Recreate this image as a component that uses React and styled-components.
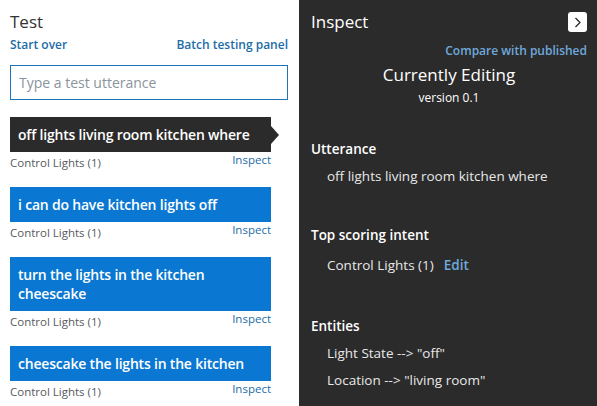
import React from 'react';
import styled, { createGlobalStyle } from 'styled-components';

const GlobalStyle = createGlobalStyle`
  html, body {
    margin: 0;
    padding: 0;
    background: #ffffff;
  }
  body {
    font-family: 'Open Sans', 'Noto Sans', sans-serif;
  }
`;

const Page = styled.div`
  display: grid;
  grid-template-columns: 299px 1fr;
  width: 597px;
  height: 406px;
  overflow: hidden;
`;

const TestPanel = styled.section`
  display: flex;
  flex-direction: column;
  padding: 10px 11px 0 10px;
  background: #fff;
`;

const Title = styled.h1`
  margin: 0;
  font-size: 17px;
  font-weight: 400;
  line-height: 24px;
  color: ${p => (p.dark ? '#ffffff' : '#333333')};
`;

const LinkRow = styled.div`
  display: flex;
  justify-content: space-between;
  margin-top: 3px;
`;

const Link = styled.a`
  font-size: 12px;
  font-weight: 600;
  line-height: 16px;
  color: ${p => (p.light ? '#6fa9dc' : '#1d6ca8')};
  cursor: pointer;
`;

const Input = styled.input`
  box-sizing: border-box;
  margin-top: 12px;
  width: 100%;
  height: 35px;
  padding: 0 8px;
  border: 1px solid #1d74b8;
  font-family: inherit;
  font-size: 14px;
  outline: none;
  &::placeholder {
    color: #8a949c;
  }
`;

const List = styled.div`
  display: flex;
  flex-direction: column;
  gap: 15px;
  margin-top: 17px;
  width: 261px;
`;

const Item = styled.div`
  display: flex;
  flex-direction: column;
`;

const Bubble = styled.div`
  position: relative;
  padding: 8px 8px;
  font-size: 14px;
  font-weight: 600;
  line-height: 19px;
  color: #ffffff;
  background: ${p => (p.active ? '#2b2b2b' : '#0a78d2')};
  letter-spacing: -0.2px;

  &::after {
    content: '';
    display: ${p => (p.active ? 'block' : 'none')};
    position: absolute;
    right: -8px;
    top: 50%;
    transform: translateY(-50%);
    border-top: 9px solid transparent;
    border-bottom: 9px solid transparent;
    border-left: 8px solid #2b2b2b;
  }
`;

const Meta = styled.div`
  display: flex;
  justify-content: space-between;
  align-items: flex-start;
  height: 20px;
  font-size: 11.5px;
  line-height: 14px;
`;

const Intent = styled.span`
  margin-top: 4px;
  color: #555b60;
`;

const InspectLink = styled.a`
  margin-top: 1px;
  color: #1d6ca8;
  cursor: pointer;
`;

const InspectPanel = styled.section`
  display: flex;
  flex-direction: column;
  padding: 10px 10px 0 12px;
  background: #2b2b2b;
  color: #ffffff;
`;

const Header = styled.div`
  display: flex;
  justify-content: space-between;
  align-items: center;
`;

const CloseButton = styled.button`
  display: flex;
  align-items: center;
  justify-content: center;
  width: 19px;
  height: 20px;
  padding: 0;
  border: none;
  border-radius: 3px;
  background: #ffffff;
  cursor: pointer;
`;

const CompareRow = styled.div`
  display: flex;
  justify-content: flex-end;
  margin-top: 9px;
`;

const Version = styled.div`
  text-align: center;
  font-size: ${p => (p.big ? '17px' : '12px')};
  line-height: ${p => (p.big ? '24px' : '20px')};
  margin-top: ${p => (p.big ? '4px' : '1px')};
`;

const Section = styled.div`
  display: flex;
  flex-direction: column;
  margin-top: ${p => p.top || 0}px;
`;

const Label = styled.div`
  font-size: 13.5px;
  font-weight: 600;
  line-height: 20px;
`;

const Value = styled.div`
  padding-left: 16px;
  margin-top: ${p => p.gap || 7}px;
  font-size: 13.5px;
  line-height: 20px;
  color: #e8e8e8;
`;

const EditLink = styled.a`
  margin-left: 10px;
  font-weight: 600;
  color: #6fa9dc;
  cursor: pointer;
`;

const utterances = [
  { text: 'off lights living room kitchen where', active: true },
  { text: 'i can do have kitchen lights off' },
  { text: 'turn the lights in the kitchen cheescake' },
  { text: 'cheescake the lights in the kitchen' },
];

const Chevron = () => (
  <svg width="8" height="11" viewBox="0 0 8 11">
    <path d="M1.5 1 L6 5.5 L1.5 10" fill="none" stroke="#222" strokeWidth="1.2" />
  </svg>
);

export default function App() {
  return (
    <Page>
      <GlobalStyle />
      <TestPanel>
        <Title>Test</Title>
        <LinkRow>
          <Link>Start over</Link>
          <Link>Batch testing panel</Link>
        </LinkRow>
        <Input placeholder="Type a test utterance" />
        <List>
          {utterances.map((u, i) => (
            <Item key={i}>
              <Bubble active={u.active}>{u.text}</Bubble>
              <Meta>
                <Intent>Control Lights (1)</Intent>
                <InspectLink>Inspect</InspectLink>
              </Meta>
            </Item>
          ))}
        </List>
      </TestPanel>
      <InspectPanel>
        <Header>
          <Title dark>Inspect</Title>
          <CloseButton aria-label="Close">
            <Chevron />
          </CloseButton>
        </Header>
        <CompareRow>
          <Link light>Compare with published</Link>
        </CompareRow>
        <Version big>Currently Editing</Version>
        <Version>version 0.1</Version>
        <Section top={31}>
          <Label>Utterance</Label>
          <Value>off lights living room kitchen where</Value>
        </Section>
        <Section top={39}>
          <Label>Top scoring intent</Label>
          <Value gap={10}>
            Control Lights (1)
            <EditLink>Edit</EditLink>
          </Value>
        </Section>
        <Section top={41}>
          <Label>Entities</Label>
          <Value>Light State --&gt; "off"</Value>
          <Value>Location --&gt; "living room"</Value>
        </Section>
      </InspectPanel>
    </Page>
  );
}
